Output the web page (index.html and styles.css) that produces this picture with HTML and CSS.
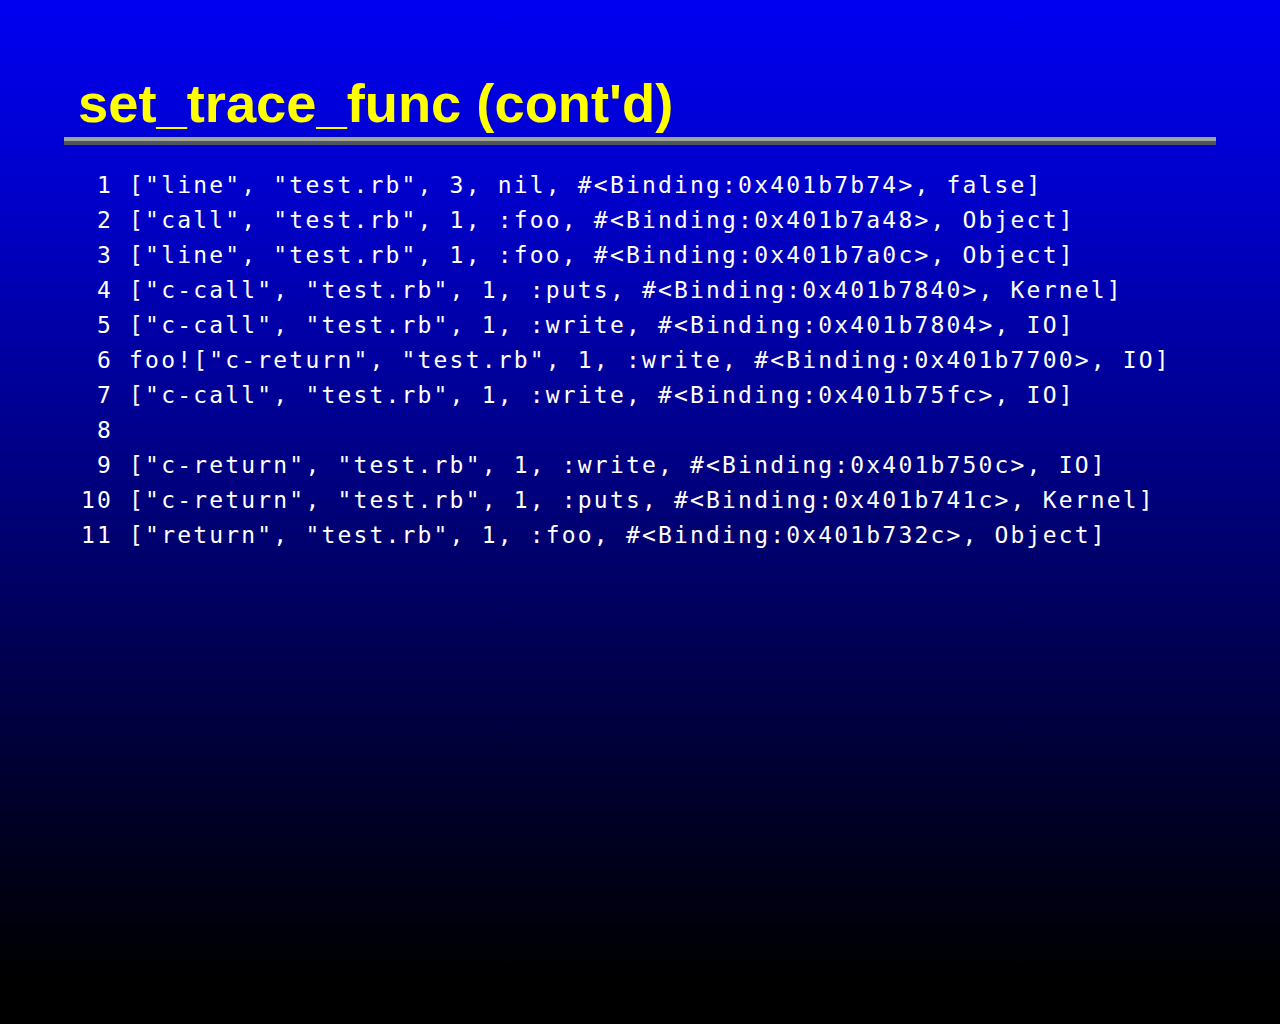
FILE: index.html
```html
<!DOCTYPE html>
<html>
<head>
<meta charset="utf-8">
<link rel="stylesheet" href="styles.css">
</head>
<body>
<div class="slide">
  <h1 class="title">set_trace_func (cont'd)</h1>
  <div class="rule"></div>
  <pre class="code"> 1 ["line", "test.rb", 3, nil, #&lt;Binding:0x401b7b74&gt;, false]
 2 ["call", "test.rb", 1, :foo, #&lt;Binding:0x401b7a48&gt;, Object]
 3 ["line", "test.rb", 1, :foo, #&lt;Binding:0x401b7a0c&gt;, Object]
 4 ["c-call", "test.rb", 1, :puts, #&lt;Binding:0x401b7840&gt;, Kernel]
 5 ["c-call", "test.rb", 1, :write, #&lt;Binding:0x401b7804&gt;, IO]
 6 foo!["c-return", "test.rb", 1, :write, #&lt;Binding:0x401b7700&gt;, IO]
 7 ["c-call", "test.rb", 1, :write, #&lt;Binding:0x401b75fc&gt;, IO]
 8 
 9 ["c-return", "test.rb", 1, :write, #&lt;Binding:0x401b750c&gt;, IO]
10 ["c-return", "test.rb", 1, :puts, #&lt;Binding:0x401b741c&gt;, Kernel]
11 ["return", "test.rb", 1, :foo, #&lt;Binding:0x401b732c&gt;, Object]</pre>
</div>
</body>
</html>
```
FILE: styles.css
```css
html, body {
  margin: 0;
  padding: 0;
  height: 100%;
}
body {
  background: linear-gradient(to bottom, #0000f2 0%, #0000c8 20%, #00006a 55%, #000020 82%, #000000 96%, #000000 100%);
  min-height: 1024px;
}
.slide {
  padding: 74px 64px 0 64px;
}
.title {
  margin: 0;
  padding-left: 14px;
  font-family: "Liberation Sans", Arial, sans-serif;
  font-weight: bold;
  font-size: 54.3px;
  line-height: 60px;
  color: #ffff00;
  height: 63px;
}
.rule {
  border-top: 4px solid #a0a6a0;
  background: #50545c;
  height: 4px;
}
.code {
  margin: 23px 0 0 0;
  padding-left: 17px;
  font-family: "DejaVu Sans Mono", monospace;
  font-size: 23px;
  line-height: 35px;
  letter-spacing: 2.18px;
  color: #ffffff;
  white-space: pre;
}
```
